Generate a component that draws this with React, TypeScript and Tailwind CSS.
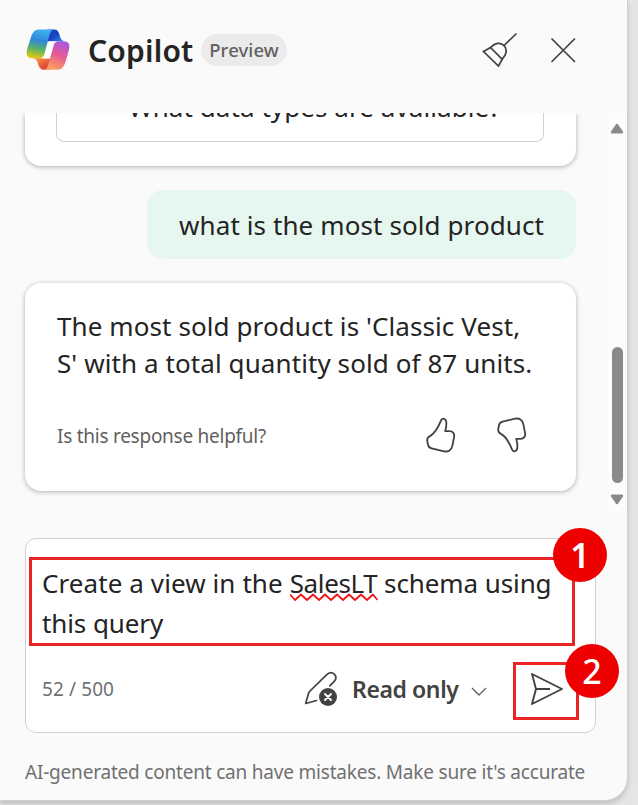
import React from "react";

function CopilotLogo() {
  return (
    <svg width="46" height="44" viewBox="0 0 46 44" fill="none" className="shrink-0">
      <defs>
        <linearGradient id="left" x1="16" y1="1" x2="10" y2="31" gradientUnits="userSpaceOnUse">
          <stop stopColor="#3db4ee" />
          <stop offset=".38" stopColor="#2f86da" />
          <stop offset=".68" stopColor="#62b360" />
          <stop offset="1" stopColor="#f2cb08" />
        </linearGradient>
        <linearGradient id="top" x1="24" y1="2" x2="34" y2="14" gradientUnits="userSpaceOnUse">
          <stop stopColor="#1d49c9" />
          <stop offset=".5" stopColor="#1b3fc4" />
          <stop offset="1" stopColor="#2f7fe6" />
        </linearGradient>
        <linearGradient id="right" x1="39" y1="12" x2="27" y2="42" gradientUnits="userSpaceOnUse">
          <stop stopColor="#a257ee" />
          <stop offset=".5" stopColor="#e75a94" />
          <stop offset="1" stopColor="#fba65a" />
        </linearGradient>
        <linearGradient id="bottom" x1="14" y1="31" x2="20" y2="41" gradientUnits="userSpaceOnUse">
          <stop stopColor="#f58c3c" />
          <stop offset="1" stopColor="#dc3a3c" />
        </linearGradient>
      </defs>
      <path d="M22 1.500H29c3 0 4.300 1.500 5.200 4.200l1 3.400c.7 2.300 2 3.700 4.300 4.200H21Z" fill="url(#top)" />
      <path d="M24.500 41.800H19c-3 0-4.500-1.500-5.400-4.200l-1-3.300C11.800 32 10.500 30.700 7.500 30.300H26Z" fill="url(#bottom)" />
      <path d="M24.500 13.500H32L25 30.500H17Z" fill="#fff" />
      <path d="M29 1.500H14C9.500 1.500 7.500 4.500 6 9L2.300 20.500C.7 26 1.700 30.300 7.500 30.300h6.500c3 0 4.600-1.600 5.500-4.600l4.300-16.500c1-4 2.500-7.700 5.200-7.700Z" fill="url(#left)" />
      <path d="M18.500 41.800H32.500c4.500 0 6.500-3.500 8-8l3.300-11.300c1.500-5.500.5-9.200-5.500-9.200h-4.600c-3 0-4.300 1.600-5.200 4.600l-5 17.600c-1 3.500-2 6.300-5 6.300Z" fill="url(#right)" />
    </svg>
  );
}

function Broom() {
  return (
    <svg width="36" height="36" viewBox="0 0 36 36" fill="none" stroke="#424242" strokeWidth="1.700" strokeLinejoin="round" strokeLinecap="round">
      <path d="M34 2 22 13.500" />
      <path d="M1.500 19.500 9 15.200C13 11 18 10 21.500 13.200c4 3.600 3.500 8.300-1.200 13.800L16.500 34Z" strokeLinejoin="miter" />
      <path d="m8.500 15.500 11.800 11.800" />
    </svg>
  );
}

function Thumb() {
  return (
    <svg width="30" height="36" viewBox="0 0 30 36" fill="none" stroke="#424242" strokeWidth="1.800" strokeLinejoin="round">
      <path d="M15.200 3.200C16 1 20.400.8 20.400 6.200c0 3-.5 5.700-1.200 8h4.300c3.300 0 5.200 2.500 4.600 5.600l-1.700 8.900c-.8 4.200-4.200 6.500-8.300 5.600L5.600 31.400c-2-.5-3.200-1.600-3.600-3.600l-.7-3.700c-.4-2.200.6-4 2.600-5 5.300-2.600 8.500-9 11.300-15.900Z" />
    </svg>
  );
}

function Arrow({ down = false }: { down?: boolean }) {
  return (
    <svg width="14" height="11" viewBox="0 0 14 11" className={down ? "rotate-180" : ""}>
      <path d="M7 2 12 9.200H2Z" fill="#8a8a8a" stroke="#8a8a8a" strokeWidth="2.400" strokeLinejoin="round" />
    </svg>
  );
}

function PencilOff() {
  return (
    <svg width="34" height="36" viewBox="0 0 34 36" fill="none" stroke="#424242" strokeWidth="1.700" strokeLinejoin="round" strokeLinecap="round">
      <path d="M12.500 29.500 1.700 32.500 4.500 22.500c.3-1 .7-1.700 1.500-2.500L22.500 3.800c3-3 6-2.300 7.800-.6 1.800 1.800 2.300 4.800-.5 7.700l-4 4" />
      <circle cx="24" cy="26" r="9" fill="#424242" stroke="none" />
      <path d="m21 23 6 6m0-6-6 6" stroke="#fff" strokeWidth="2" />
    </svg>
  );
}

function Squiggle() {
  return (
    <svg width="88" height="9" viewBox="0 0 88 9" fill="none" className="absolute top-[28px] left-0">
      <path d="M0 1.500 5 7l6-5.500L17 7l6-5.500L29 7l6-5.500L41 7l6-5.500L53 7l6-5.500L65 7l6-5.500L77 7l6-5.500L87.500 7" stroke="#f01414" strokeWidth="1.800" strokeLinejoin="round" />
    </svg>
  );
}

export default function App() {
  return (
    <div className="h-[805px] w-[638px] overflow-hidden bg-[#e5e5e5] font-['Noto_Sans',sans-serif] text-[#242424]">
      <main className="flex h-[801px] w-[628px] flex-col overflow-hidden rounded-br-[23px] border-r border-b border-[#d0d0d0] bg-[#fafafa] shadow-[0_3px_5px_rgba(0,0,0,0.16)]">
        <header className="flex h-[113px] shrink-0 items-start pt-[28px] pl-[25px]">
          <CopilotLogo />
          <h1 className="ml-[17px] w-[113px] text-[30px] leading-[46px] font-semibold tracking-[0.2px] whitespace-nowrap">Copilot</h1>
          <span className="mt-[6px] flex h-[32px] w-[86px] items-center justify-center rounded-full bg-[#ebebeb] text-[18.500px] font-medium tracking-[0.1px] text-[#616161]">Preview</span>
          <button className="mt-[4px] ml-[195px]"><Broom /></button>
          <button className="mt-[9px] ml-[32px]">
            <svg width="26" height="26" viewBox="0 0 26 26" stroke="#424242" strokeWidth="1.700" strokeLinecap="round"><path d="m2 2 22.500 22.500m0-22.500L2 24.500" /></svg>
          </button>
        </header>

        <div className="flex h-[401px] shrink-0 justify-between overflow-hidden">
          <div className="flex w-[600px] flex-col pl-[25px]">
            <section className="h-[53px] w-[551px] shrink-0 rounded-b-[16px] bg-white pr-[32px] pl-[31px] shadow-[0_1px_5px_rgba(0,0,0,0.3)] [clip-path:inset(0_-10px_-12px_-10px)]">
              <div className="flex h-[29px] items-end justify-center overflow-hidden rounded-b-[8px] border border-t-0 border-[#d1d1d1]">
                <span className="h-[52px] shrink-0 pl-[29px] text-[26px] leading-[37px] tracking-[0.07px] whitespace-nowrap">What data types are available?</span>
              </div>
            </section>
            <div className="mt-[24px] ml-[122px] flex h-[69px] w-[429px] shrink-0 items-center rounded-[16px] bg-[#e6f7ef] pt-[2px] pl-[32px] text-[26px] tracking-[0.1px] whitespace-nowrap">what is the most sold product</div>
            <section className="mt-[24px] h-[208px] w-[551px] shrink-0 rounded-[16px] bg-white pt-[25px] pl-[32px] shadow-[0_1px_5px_rgba(0,0,0,0.3)]">
              <p className="text-[26px] leading-[37px] tracking-[0.09px] whitespace-nowrap">The most sold product is 'Classic Vest,<br />S' with a total quantity sold of 87 units.</p>
              <div className="mt-[34px] flex h-[38px] items-center">
                <span className="w-[369px] pt-[2px] text-[19px] tracking-[-0.26px] text-[#616161]">Is this response helpful?</span>
                <button><Thumb /></button>
                <button className="ml-[41px] -scale-y-100"><Thumb /></button>
              </div>
            </section>
          </div>
          <div className="flex w-[20px] flex-col items-center bg-[#fcfcfc] pt-[10px]">
            <Arrow />
            <div className="mt-[213px] mb-[11px] h-[136px] w-[11px] rounded-full bg-[#8a8a8a]" />
            <Arrow down />
          </div>
        </div>

        <section className="relative mt-[24px] ml-[25px] h-[195px] w-[571px] shrink-0 rounded-[11px] border border-[#d1d1d1] bg-white">
          <p className="pt-[24px] pl-[16px] text-[26px] leading-[40px] whitespace-nowrap"><span className="tracking-[0.09px]">Create a view in the </span><span className="relative tracking-[-0.35px]">SalesLT<Squiggle /></span><span className="tracking-[-0.1px]"> schema using<br />this query</span></p>
          <div className="mt-[23px] flex h-[46px] items-center pl-[16px]">
            <span className="w-[262px] text-[19px] tracking-[0.1px] text-[#707070]">52 / 500</span>
            <PencilOff />
            <span className="ml-[14px] w-[119px] text-[23px] font-semibold tracking-[-0.4px] whitespace-nowrap text-[#424242]">Read only</span>
            <svg width="16" height="10" viewBox="0 0 16 10" fill="none" stroke="#616161" strokeWidth="1.400" className="mt-[5px]"><path d="m1 1 7 7 7-7" /></svg>
            <button className="ml-[43px]">
              <svg width="34" height="34" viewBox="0 0 34 34" fill="none" stroke="#424242" strokeWidth="1.900" strokeLinejoin="round"><path d="M2 2 32 17 2 32 6 17Z M6 17H20" /></svg>
            </button>
          </div>
          <div className="absolute top-[18px] left-[3px] h-[89px] w-[546px] border-[3px] border-[#e82424]" />
          <div className="absolute top-[123px] left-[487px] h-[58px] w-[66px] border-[3px] border-[#e82424]" />
          <div className="absolute top-[-11px] left-[527px] flex h-[54px] w-[54px] items-center justify-center rounded-full bg-[#ee0000] text-[34px] font-semibold text-white">1</div>
          <div className="absolute top-[105px] left-[539px] flex h-[54px] w-[54px] items-center justify-center rounded-full bg-[#ee0000] text-[34px] font-medium text-white">2</div>
        </section>
        <p className="mt-[23px] ml-[25px] text-[19px] leading-[32px] tracking-[-0.2px] whitespace-nowrap text-[#707070]">AI-generated content can have mistakes. Make sure it's accurate</p>
      </main>
    </div>
  );
}
